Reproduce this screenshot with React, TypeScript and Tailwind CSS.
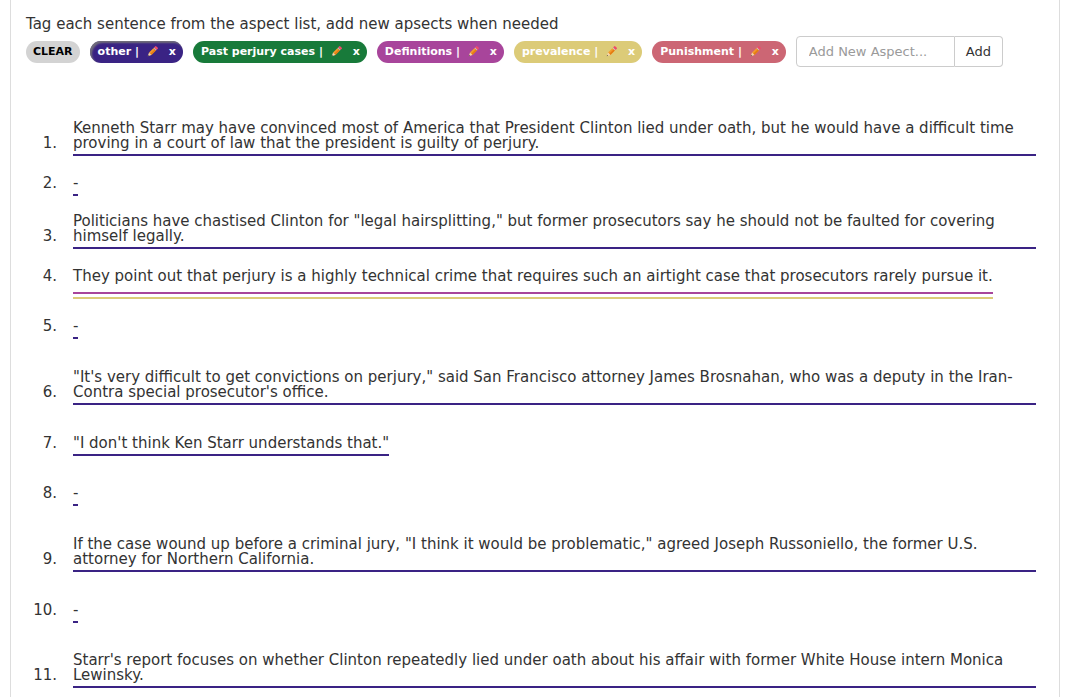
import { useState } from "react";

type Aspect = { name: string; bg: string; line: string };

const aspects: Aspect[] = [
  { name: "other", bg: "bg-[#3a2384]", line: "border-[#3a2384]" },
  { name: "Past perjury cases", bg: "bg-[#187a3a]", line: "border-[#187a3a]" },
  { name: "Definitions", bg: "bg-[#a8459b]", line: "border-[#a8459b]" },
  { name: "prevalence", bg: "bg-[#dccb78]", line: "border-[#dccb78]" },
  { name: "Punishment", bg: "bg-[#cc6674]", line: "border-[#cc6674]" },
];

type Sentence = { text: string; tags: number[]; gap: string };

const sentences: Sentence[] = [
  {
    text: "Kenneth Starr may have convinced most of America that President Clinton lied under oath, but he would have a difficult time proving in a court of law that the president is guilty of perjury.",
    tags: [0],
    gap: "mt-0",
  },
  { text: "-", tags: [0], gap: "mt-[20px]" },
  {
    text: 'Politicians have chastised Clinton for "legal hairsplitting," but former prosecutors say he should not be faulted for covering himself legally.',
    tags: [0],
    gap: "mt-[18px]",
  },
  {
    text: "They point out that perjury is a highly technical crime that requires such an airtight case that prosecutors rarely pursue it.",
    tags: [3, 2],
    gap: "mt-[20px]",
  },
  { text: "-", tags: [0], gap: "mt-[20px]" },
  {
    text: '"It\'s very difficult to get convictions on perjury," said San Francisco attorney James Brosnahan, who was a deputy in the Iran-Contra special prosecutor\'s office.',
    tags: [0],
    gap: "mt-[31px]",
  },
  { text: '"I don\'t think Ken Starr understands that."', tags: [0], gap: "mt-[31px]" },
  { text: "-", tags: [0], gap: "mt-[30px]" },
  {
    text: 'If the case wound up before a criminal jury, "I think it would be problematic," agreed Joseph Russoniello, the former U.S. attorney for Northern California.',
    tags: [0],
    gap: "mt-[31px]",
  },
  { text: "-", tags: [0], gap: "mt-[31px]" },
  {
    text: "Starr's report focuses on whether Clinton repeatedly lied under oath about his affair with former White House intern Monica Lewinsky.",
    tags: [0],
    gap: "mt-[30px]",
  },
];

function Pencil() {
  return (
    <svg width="12" height="12" viewBox="0 0 12 12" className="inline-block">
      <g transform="rotate(45 6 6)">
        <rect x="4.3" y="-1" width="3.4" height="2.4" fill="#ee4b6a" />
        <rect x="4.3" y="1.4" width="3.4" height="0.9" fill="#c9c9c9" />
        <rect x="4.3" y="2.3" width="3.4" height="6.2" fill="#f59a2b" />
        <rect x="6" y="2.3" width="1.7" height="6.2" fill="#e47c12" />
        <polygon points="4.3,8.5 7.7,8.5 6,12" fill="#f6d6a8" />
        <polygon points="5.4,10.8 6.6,10.8 6,12" fill="#333" />
      </g>
    </svg>
  );
}

function Underlined({ tags, children }: { tags: number[]; children: React.ReactNode }) {
  if (tags.length === 2) {
    return (
      <div className={`w-fit border-b-2 pb-[3px] ${aspects[tags[0]].line}`}>
        <div className={`border-b-2 pb-[8px] ${aspects[tags[1]].line}`}>{children}</div>
      </div>
    );
  }
  return <div className={`w-fit border-b-2 pb-[3px] ${aspects[tags[0]].line}`}>{children}</div>;
}

export default function App() {
  const [value, setValue] = useState("");

  return (
    <div className="min-h-screen bg-white font-['DejaVu_Sans',Verdana,sans-serif] text-[#333]">
      <div className="ml-[10px] w-[1050px] min-h-[697px] border-x border-[#dddddd] pl-[15px] pr-[23px] pt-[15px]">
        <p className="text-[15px] leading-[18px]">
          Tag each sentence from the aspect list, add new apsects when needed
        </p>

        <div className="mt-[3px] flex items-center gap-[10px]">
          <span className="rounded-full bg-[#d3d3d3] px-[7px] py-[4px] text-[11px] font-bold leading-[14px] text-black">
            CLEAR
          </span>
          {aspects.map((a, i) => (
            <span
              key={a.name}
              className={`flex items-center rounded-full ${a.bg} pl-[8px] pr-[7px] py-[4px] text-[11px] font-bold leading-[14px] text-white ${
                i === 0 ? "shadow-[inset_2px_2px_2px_rgba(120,120,120,0.9)]" : ""
              }`}
            >
              <span className="whitespace-pre">{a.name} | </span>
              <span className="ml-[3px]">
                <Pencil />
              </span>
              <span className="ml-[11px]">x</span>
            </span>
          ))}
          <div className="flex">
            <input
              value={value}
              onChange={(e) => setValue(e.target.value)}
              placeholder="Add New Aspect..."
              className="h-[31px] w-[159px] rounded-l-[4px] border border-[#cccccc] px-[12px] text-[13px] text-[#333] outline-none placeholder:text-[#9a9a9a]"
            />
            <button
              type="button"
              className="h-[31px] w-[48px] rounded-r-[4px] border border-l-0 border-[#cccccc] bg-white text-[13px] text-[#333]"
            >
              Add
            </button>
          </div>
        </div>

        <ol className="mt-[54px] text-[15px] leading-[15px]">
          {sentences.map((s, i) => (
            <li key={i} className={`flex items-end ${s.gap}`}>
              <span
                className={`w-[47px] shrink-0 pr-[16px] text-right ${
                  s.tags.length === 2 ? "pb-[15px]" : "pb-[5px]"
                }`}
              >
                {i + 1}.
              </span>
              <Underlined tags={s.tags}>{s.text}</Underlined>
            </li>
          ))}
        </ol>
      </div>
    </div>
  );
}
